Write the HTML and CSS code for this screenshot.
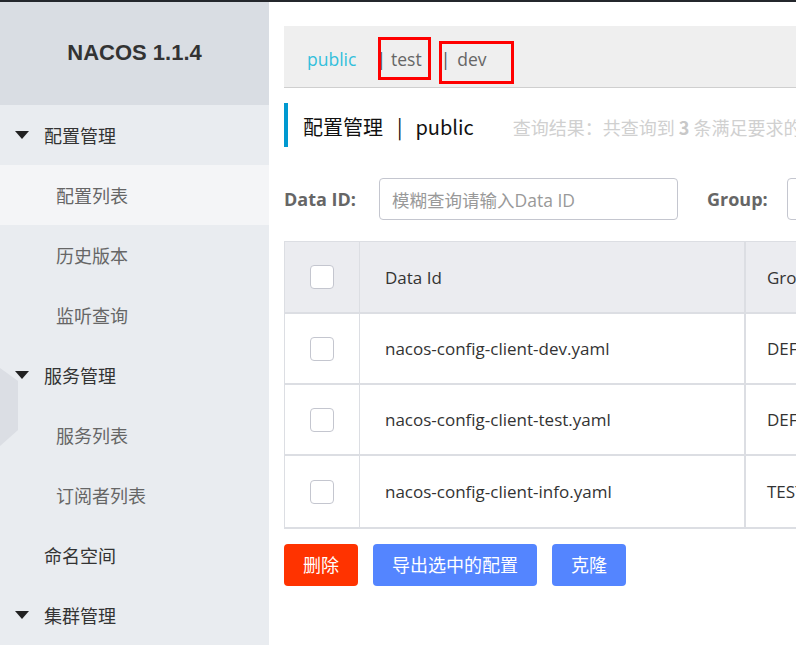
FILE: index.html
```html
<!DOCTYPE html>
<html lang="zh">
<head>
<meta charset="utf-8">
<title>Nacos</title>
<link rel="stylesheet" href="styles.css">
</head>
<body>
<div class="topline"></div>
<div class="layout">
  <aside class="sidebar">
    <div class="brand">NACOS 1.1.4</div>
    <ul class="menu">
      <li class="group"><span class="caret"></span>配置管理</li>
      <li class="sub active">配置列表</li>
      <li class="sub">历史版本</li>
      <li class="sub">监听查询</li>
      <li class="group"><span class="caret"></span>服务管理</li>
      <li class="sub">服务列表</li>
      <li class="sub">订阅者列表</li>
      <li class="group plain">命名空间</li>
      <li class="group"><span class="caret"></span>集群管理</li>
    </ul>
    <svg class="hex" width="18" height="78" viewBox="0 0 18 78"><polygon points="0,0 18,13 18,62 0,78" fill="#dbdee4"/></svg>
  </aside>
  <main class="main">
    <div class="inner">
      <div class="ns-bar">
        <span class="ns ns-active">public</span>
        <span class="sep sep1">|</span>
        <span class="ns">test</span>
        <span class="sep sep2">|</span>
        <span class="ns">dev</span>
        <span class="mark mark1"></span>
        <span class="mark mark2"></span>
      </div>
      <div class="title-row">
        <span class="title">配置管理</span>
        <span class="title title-sep">|</span>
        <span class="title">public</span>
        <span class="summary">查询结果：共查询到 <b>3</b> 条满足要求的配置。</span>
      </div>
      <div class="search-row">
        <label class="label">Data ID:</label>
        <div class="input"><span class="ph">模糊查询请输入Data ID</span></div>
        <label class="label label-group">Group:</label>
        <div class="input"><span class="ph">模糊查询请输入Group</span></div>
      </div>
      <div class="table">
        <div class="row head">
          <div class="cell c-check"><span class="checkbox"></span></div>
          <div class="cell c-id">Data Id</div>
          <div class="cell c-group">Group</div>
        </div>
        <div class="row">
          <div class="cell c-check"><span class="checkbox"></span></div>
          <div class="cell c-id">nacos-config-client-dev.yaml</div>
          <div class="cell c-group">DEFAULT_GROUP</div>
        </div>
        <div class="row">
          <div class="cell c-check"><span class="checkbox"></span></div>
          <div class="cell c-id">nacos-config-client-test.yaml</div>
          <div class="cell c-group">DEFAULT_GROUP</div>
        </div>
        <div class="row last">
          <div class="cell c-check"><span class="checkbox"></span></div>
          <div class="cell c-id">nacos-config-client-info.yaml</div>
          <div class="cell c-group">TEST_GROUP</div>
        </div>
      </div>
      <div class="actions">
        <button class="btn btn-danger">删除</button>
        <button class="btn btn-primary">导出选中的配置</button>
        <button class="btn btn-primary">克隆</button>
      </div>
    </div>
  </main>
</div>
</body>
</html>
```
FILE: styles.css
```css
* { box-sizing: border-box; }
html, body {
  margin: 0;
  padding: 0;
  width: 796px;
  height: 645px;
  overflow: hidden;
  background: #fff;
  font-family: "Open Sans", "Noto Sans CJK SC", sans-serif;
  color: #333;
}
.topline {
  height: 2px;
  background: #24272c;
}
.layout {
  display: flex;
  height: 643px;
}
.sidebar {
  position: relative;
  width: 269px;
  flex: none;
  background: #e9ecf0;
}
.brand {
  height: 103px;
  background: #d9dde3;
  display: flex;
  align-items: center;
  justify-content: center;
  padding-bottom: 2px;
  font-family: "Liberation Sans", sans-serif;
  font-weight: bold;
  font-size: 22px;
  color: #333;
}
.menu {
  list-style: none;
  margin: 0;
  padding: 0;
}
.menu li {
  height: 60px;
  display: flex;
  align-items: center;
  font-size: 18px;
  font-family: "Noto Sans CJK SC", sans-serif;
}
.group {
  color: #333;
  padding-left: 15px;
}
.group.plain {
  padding-left: 44px;
}
.caret {
  width: 0;
  height: 0;
  border-left: 7px solid transparent;
  border-right: 7px solid transparent;
  border-top: 8px solid #222;
  margin-right: 15px;
}
.sub {
  color: #666;
  padding-left: 56px;
}
.sub.active {
  background: #f4f5f7;
}
.hex {
  position: absolute;
  left: 0;
  top: 366px;
}
.main {
  flex: 1;
  overflow: hidden;
  padding: 24px 0 0 15px;
}
.inner {
  width: 900px;
}
.ns-bar {
  position: relative;
  height: 62px;
  background: #efefef;
  border-bottom: 1px solid #cfcfcf;
  display: flex;
  align-items: center;
  padding: 4px 0 0 23px;
  font-size: 17.5px;
  color: #666;
}
.ns-active { color: #33bfdc; }
.sep {
  color: #555;
}
.sep1 { margin: 0 5px 0 20px; }
.sep2 { margin: 0 7px 0 19px; }
.mark {
  position: absolute;
  border: 3px solid #ff0000;
}
.mark1 { left: 94px; top: 11px; width: 53px; height: 43px; }
.mark2 { left: 155px; top: 15px; width: 75px; height: 43px; }
.title-row {
  margin-top: 15px;
  height: 44px;
  border-left: 4px solid #0099d0;
  display: flex;
  align-items: center;
  padding: 3px 0 0 15px;
}
.title {
  font-size: 20px;
  color: #111;
  font-family: "Noto Sans CJK SC", sans-serif;
}
.title-sep {
  margin: 0 13px 0 14px;
}
.summary {
  margin-left: 39px;
  font-size: 18px;
  color: #d0d0d0;
  font-family: "Noto Sans CJK SC", sans-serif;
  white-space: nowrap;
}
.summary b { color: #c8c8c8; }
.search-row {
  margin-top: 31px;
  display: flex;
  align-items: center;
  height: 42px;
}
.label {
  font-weight: bold;
  font-size: 18px;
  color: #666;
  width: 95px;
}
.label-group {
  width: auto;
  margin: 0 19px 0 29px;
}
.input {
  width: 299px;
  height: 42px;
  border: 1px solid #c4c6cf;
  border-radius: 4px;
  display: flex;
  align-items: center;
  padding-left: 12px;
  flex: none;
}
.ph {
  font-size: 17.5px;
  color: #999;
  white-space: nowrap;
}
.table {
  margin-top: 21px;
  border: 1px solid #dcdee3;
  border-bottom-width: 2px;
}
.row {
  display: flex;
  height: 71px;
  border-bottom: 2px solid #dcdee3;
}
.row.last { border-bottom: none; }
.row.head {
  background: #ebecf0;
  height: 72px;
}
.cell {
  display: flex;
  align-items: center;
  font-size: 17px;
  color: #333;
  white-space: nowrap;
}
.c-check {
  width: 75px;
  justify-content: center;
  border-right: 1px solid #dcdee3;
}
.c-id {
  width: 386px;
  padding-left: 25px;
  border-right: 2px solid #dcdee3;
}
.c-group {
  padding-left: 21px;
}
.checkbox {
  width: 24px;
  height: 24px;
  border: 1px solid #c4c6cf;
  border-radius: 4px;
  background: #fff;
  margin-right: 1px;
}
.actions {
  margin-top: 15px;
  display: flex;
  gap: 15px;
}
.btn {
  height: 42px;
  border: none;
  border-radius: 4px;
  padding: 0 19px 2px;
  font-size: 18px;
  color: #fff;
  font-family: "Noto Sans CJK SC", sans-serif;
}
.btn-danger { background: #ff3300; }
.btn-primary { background: #5485ff; }
```
